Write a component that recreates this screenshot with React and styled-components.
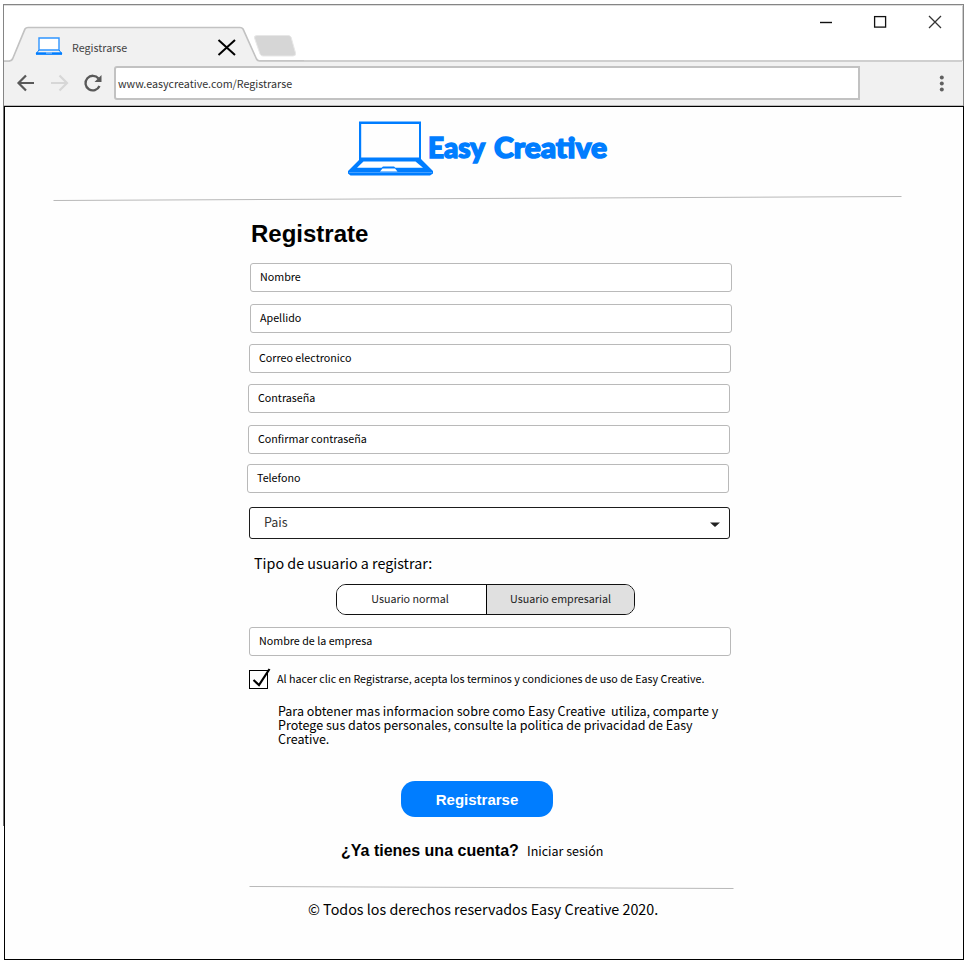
import React from "react";
import styled, { createGlobalStyle } from "styled-components";

const GlobalStyle = createGlobalStyle`
  * { box-sizing: border-box; }
  body { margin: 0; background: #fff; overflow: hidden; }
`;

const sans = '"Noto Sans CJK SC", "Noto Sans", sans-serif';
const arial = '"Liberation Sans", Arial, sans-serif';
const BLUE = "#007dff";

const Screen = styled.div`
  width: 967px;
  height: 964px;
  padding: 4px 3px 0 3px;
  font-family: ${sans};
  color: #000;
`;

const Window = styled.div`
  width: 961px;
  height: 956px;
  background: linear-gradient(#777, #777) 0 0 / 1px 822px no-repeat;
`;

const Chrome = styled.header`
  height: 102px;
  border: 1px solid #858585;
  border-bottom: 0;
  box-shadow: inset 0 1px 0 #ddd, inset -1px 0 0 #ccc;
`;

const TitleBar = styled.div`
  height: 56px;
  display: flex;
  justify-content: space-between;
  background: linear-gradient(#cfcfcf, #cfcfcf) 256px 100% / 702px 1px no-repeat;
`;

const TabStrip = styled.svg`
  display: block;
  width: 300px;
  height: 57px;
`;

const TabLabel = styled.text`
  font: 10.72px ${sans};
  fill: #444;
`;

const WindowButtons = styled.svg`
  display: block;
  width: 150px;
  height: 40px;
`;

const Toolbar = styled.div`
  height: 45px;
  box-shadow: inset 0 -1px 0 #bbb;
  display: flex;
  align-items: flex-start;
  background: linear-gradient(#cfcfcf, #cfcfcf) 256px 0 / 702px 1px no-repeat #f1f1f1;
`;

const NavIcons = styled.svg`
  display: block;
  width: 110px;
  height: 44px;
  flex: none;
`;

const Address = styled.div`
  width: 746px;
  height: 34px;
  margin-top: 5px;
  padding-left: 2px;
  border: 2px solid #c2c2c2;
  border-radius: 3px 0 0 3px;
  background: #fff;
  font-size: 10.72px;
  line-height: 31px;
  color: #333;
`;

const MenuDots = styled.svg`
  display: block;
  width: 20px;
  height: 40px;
  margin-left: 72px;
`;

const Page = styled.main`
  width: 960px;
  height: 854px;
  margin-left: 1px;
  border: 1px solid #000;
  background: #fefefe;
`;

const Brand = styled.svg`
  display: block;
  width: 270px;
  height: 64px;
  margin: 8px 0 0 341px;
`;

const BrandText = styled.text`
  font: 900 28px Lato, ${arial};
  fill: ${BLUE};
  stroke: ${BLUE};
  stroke-width: 1.5px;
`;

const Rule = styled.svg`
  display: block;
  width: ${(p) => p.$width}px;
  height: 8px;
  margin: ${(p) => p.$top}px 0 0 ${(p) => p.$left}px;
`;

const Title = styled.h1`
  margin: 17px 0 0 246px;
  height: 29px;
  font: bold 24px/30px ${arial};
`;

const Field = styled.div`
  width: 482px;
  height: 29px;
  margin: ${(p) => p.$top}px 0 0 ${(p) => p.$left}px;
  padding-left: 9px;
  border: 1px solid #b9b9b9;
  border-radius: 3px;
  background: #fff;
  font-size: 10.72px;
  line-height: 26px;
`;

const Select = styled.div`
  width: 481px;
  height: 32px;
  margin: 14px 0 0 244px;
  padding: 0 9px 0 14px;
  border: 1px solid #1c1c1c;
  border-radius: 3px;
  background: #fff;
  display: flex;
  justify-content: space-between;
  font-size: 12.5px;
  line-height: 27px;
  color: #333;
`;

const Caret = styled.svg`
  width: 10px;
  height: 6px;
  margin-top: 14px;
`;

const Line = styled.p`
  margin: ${(p) => p.$top}px 0 0 ${(p) => p.$left}px;
  height: 24px;
  font-size: 14.32px;
  line-height: 24px;
  white-space: pre;
`;

const Toggle = styled.div`
  width: 299px;
  height: 31px;
  margin: 9px 0 0 331px;
  border: 1px solid #111;
  border-radius: 10px;
  overflow: hidden;
  display: flex;
  background: #fff;
`;

const ToggleOption = styled.div`
  width: ${(p) => (p.$active ? 148 : 149)}px;
  background: ${(p) => (p.$active ? "#e0e0e0" : "#fff")};
  border-left: ${(p) => (p.$active ? "1px solid #000" : "0")};
  padding-right: ${(p) => (p.$active ? 0 : 3)}px;
  font-size: 10.72px;
  line-height: 27px;
  text-align: center;
  color: #222;
`;

const Consent = styled.div`
  height: 24px;
  margin: 10px 0 0 243px;
  display: flex;
  font-size: 10.72px;
  line-height: 25px;
  white-space: nowrap;
`;

const Check = styled.svg`
  width: 24px;
  height: 24px;
  margin-right: 5px;
`;

const Privacy = styled.p`
  margin: 14px 0 0 273px;
  height: 42px;
  font-size: 12.52px;
  line-height: 14px;
  white-space: pre;
`;

const Submit = styled.button`
  display: block;
  width: 152px;
  height: 36px;
  margin: 35px 0 0 396px;
  padding: 1px 0 0;
  border: 0;
  border-radius: 14px;
  background: ${BLUE};
  color: #fff;
  font: bold 15px ${arial};
`;

const Login = styled.div`
  height: 24px;
  margin: 22px 0 0 336px;
  display: flex;
  align-items: center;
  white-space: nowrap;
`;

const Question = styled.strong`
  width: 186px;
  font: bold 16px/24px ${arial};
`;

const SignIn = styled.span`
  font-size: 12.5px;
  line-height: 24px;
`;

function Laptop() {
  return (
    <g fill={BLUE}>
      <path fillRule="evenodd" d="M12 1.500H74V39L86 51V53.500L83 55.500H3.500L1 53.500V51L12 40ZM14.200 4V37.500H72V4Z" />
      <path d="M16.500 41.500L10 47.700H34.500L36 46.500H47L48.500 47.700H76L68.500 41.500Z" fill="#fff" />
      <path d="M35.500 48.500H48L50.500 51.500H33Z" fill="#fff" />
      <path d="M2 52.500H85" stroke="#75b8ff" strokeWidth=".6" />
    </g>
  );
}

export default function App() {
  return (
    <Screen>
      <GlobalStyle />
      <Window>
        <Chrome>
          <TitleBar>
            <TabStrip viewBox="4 5 300 57">
              <path d="M4 61H11Q13 60 14 58L26 28H242L255 58Q256 61 259 61H304V62H4Z" fill="#f1f1f1" />
              <path d="M4 61H9Q12 61 13 58L25 29Q26 27.5 28 27.5H240Q242 27.5 243 29L256 58Q257 61 260 61H304" fill="none" stroke="#c2c2c2" strokeWidth="1.7" />
              <path d="M257 35.500H288Q290 35.500 291 37L295.500 53Q296 56 293 56H263Q261 56 260 54L254.500 38Q254 35.500 257 35.500Z" fill="#d6d6d6" stroke="#e7e7e7" />
              <g fill="none" stroke={BLUE}>
                <path d="M39 38H59V50H39Z" stroke="#2f95ff" strokeWidth="1.400" fill="#fff" />
                <path d="M39 50L36 54H62L59 50" strokeWidth="1" />
                <path d="M36 53.500H62" strokeWidth="2.400" />
                <path d="M46 53H52" stroke="#a8d2ff" strokeWidth="1" />
              </g>
              <TabLabel x="72" y="52">Registrarse</TabLabel>
              <path d="M218.500 40L235 55M235 40L218.500 55" stroke="#000" strokeWidth="2" />
            </TabStrip>
            <WindowButtons viewBox="813 5 150 40" fill="none">
              <path d="M820 22.500H832" stroke="#111" strokeWidth="1.400" />
              <rect x="874.600" y="16.600" width="11" height="10.500" stroke="#111" strokeWidth="1.300" />
              <path d="M929 16L941 28M941 16L929 28" stroke="#333" strokeWidth="1.300" />
            </WindowButtons>
          </TitleBar>
          <Toolbar>
            <NavIcons viewBox="4 61 110 44" fill="none">
              <path d="M4 61.200H10" stroke="#c2c2c2" />
              <path d="M34 83H19M26 75.500L18.500 83L26 90.500" stroke="#595959" strokeWidth="2.200" />
              <path d="M51 83H66M59.500 75.500L67 83L59.500 90.500" stroke="#d7d7d7" strokeWidth="2.200" />
              <path d="M98.500 78.500A7.300 7.300 0 1 0 99.500 86" stroke="#595959" strokeWidth="2.300" />
              <path d="M101.500 75V82H94.500Z" fill="#595959" />
            </NavIcons>
            <Address>www.easycreative.com/Registrarse</Address>
            <MenuDots viewBox="932 61 20 40" fill="#606060">
              <circle cx="941.800" cy="77.500" r="2" />
              <circle cx="941.800" cy="83.500" r="2" />
              <circle cx="941.800" cy="89.500" r="2" />
            </MenuDots>
          </Toolbar>
        </Chrome>
        <Page>
          <Brand viewBox="346 115 270 64">
            <g transform="translate(347 120)">
              <Laptop />
            </g>
            <BrandText x="428" y="157.500" textLength="57" lengthAdjust="spacingAndGlyphs">Easy</BrandText>
            <BrandText x="494" y="157.500" textLength="113" lengthAdjust="spacingAndGlyphs">Creative</BrandText>
          </Brand>
          <Rule $width={849} $top={15} $left={48} viewBox="53 194 849 8">
            <path d="M53.500 200.500L901.500 196.500" stroke="#b9b9b9" />
          </Rule>
          <Title>Registrate</Title>
          <Field $top={15} $left={245}>Nombre</Field>
          <Field $top={12} $left={245}>Apellido</Field>
          <Field $top={11} $left={244}>Correo electronico</Field>
          <Field $top={11} $left={243}>Contraseña</Field>
          <Field $top={12} $left={243}>Confirmar contraseña</Field>
          <Field $top={10} $left={242}>Telefono</Field>
          <Select>
            Pais
            <Caret viewBox="0 0 10 6"><path d="M0 .5H10L5 5Z" fill="#222" /></Caret>
          </Select>
          <Line $top={12} $left={249}>Tipo de usuario a registrar:</Line>
          <Toggle>
            <ToggleOption>Usuario normal</ToggleOption>
            <ToggleOption $active>Usuario empresarial</ToggleOption>
          </Toggle>
          <Field $top={12} $left={244}>Nombre de la empresa</Field>
          <Consent>
            <Check viewBox="248 666 24 24" fill="none" stroke="#000">
              <rect x="249.500" y="670.500" width="18" height="18" fill="#fff" />
              <path d="M253.500 680L259 685L269.500 669" strokeWidth="2.200" />
            </Check>
            Al hacer clic en Registrarse, acepta los terminos y condiciones de uso de Easy Creative.
          </Consent>
          <Privacy>
            {"Para obtener mas informacion sobre como Easy Creative  utiliza, comparte y\nProtege sus datos personales, consulte la politica de privacidad de Easy\nCreative."}
          </Privacy>
          <Submit>Registrarse</Submit>
          <Login>
            <Question>¿Ya tienes una cuenta?</Question>
            <SignIn>Iniciar sesión</SignIn>
          </Login>
          <Rule $width={486} $top={20} $left={244} viewBox="249 883 486 8">
            <path d="M249.500 886.500L733.500 888.500" stroke="#b9b9b9" />
          </Rule>
          <Line $top={6} $left={303}>© Todos los derechos reservados Easy Creative 2020.</Line>
        </Page>
      </Window>
    </Screen>
  );
}
